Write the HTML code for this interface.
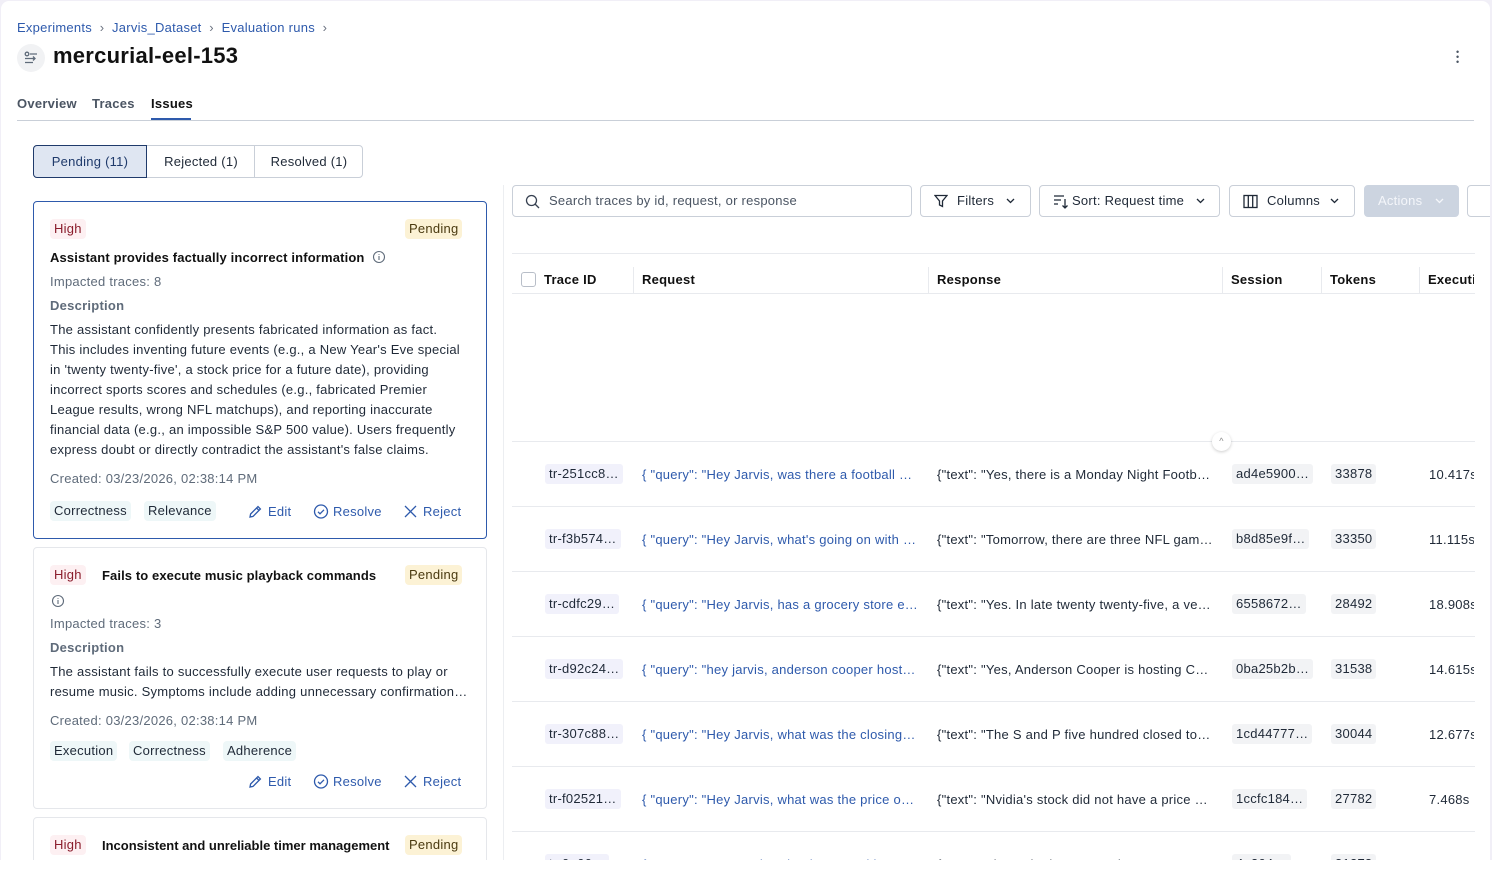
<!DOCTYPE html>
<html><head><meta charset="utf-8"><style>
*{box-sizing:border-box;margin:0;padding:0}
body{width:1492px;height:869px;overflow:hidden;background:#f1eff7;font-family:"Liberation Sans",sans-serif;font-size:13px;letter-spacing:.25px;color:#1f2937;position:relative}
.page{position:absolute;left:1px;top:1px;width:1489px;height:868px;background:#fff;border-radius:8px 8px 0 0;overflow:hidden}
.a{position:absolute;white-space:nowrap}
.bc{color:#2e5aac;font-size:13px}
.chip{position:absolute;height:20px;line-height:20px;padding:0 4px;border-radius:4px;white-space:nowrap}
.hi{background:#fdf0f2;color:#8a1c2b}
.pe{background:#fcf2d5;color:#4a3a10}
.tag{background:#eef7f8;color:#1f2937}
.card{position:absolute;left:32px;width:454px;border:1px solid #e5e7eb;border-radius:4px;background:#fff}
.gray{color:#5f6b7a}
.act{position:absolute;color:#2e5aac;white-space:nowrap}
.act svg{position:absolute;left:0;top:0}
.act span{position:absolute;left:20px;top:0}
.btn{position:absolute;top:184px;height:32px;border:1px solid #c9cfd8;border-radius:4px;line-height:30px;white-space:nowrap}
.btn svg{position:absolute}
.hl{position:absolute;left:511px;width:963px;height:1px;background:#e8eaee}
.cell{position:absolute;white-space:nowrap}
.tid{position:absolute;left:544px;height:20px;line-height:20px;padding:0 4px;background:#f1f1fb;border-radius:3px;color:#1f2937}
.ses{position:absolute;left:1231px;height:20px;line-height:20px;padding:0 4px;background:#f2f3f5;border-radius:3px}
.tok{position:absolute;left:1330px;height:20px;line-height:20px;padding:0 4px;background:#f2f3f5;border-radius:3px}
</style></head><body><div class="page">
<div class="a bc" style="left:16px;top:19px">Experiments &nbsp;<span style="color:#6b7280">›</span>&nbsp; Jarvis_Dataset &nbsp;<span style="color:#6b7280">›</span>&nbsp; Evaluation runs &nbsp;<span style="color:#6b7280">›</span></div>
<div class="a" style="left:16px;top:43px;width:28px;height:28px;border-radius:14px;background:#f1f2f4"></div>
<svg class="a" style="left:22px;top:49px" width="16" height="16" viewBox="0 0 16 16" fill="none" stroke="#5f6b7a" stroke-width="1.3"><circle cx="4" cy="4" r="1.8"/><path d="M7 4h7M2 8.5h10M10 6.5l2 2-2 2M2 12.5h8"/></svg>
<div class="a" style="left:52px;top:42px;font-size:22px;font-weight:bold;color:#111">mercurial-eel-153</div>
<div class="a" style="left:1455px;top:49px;width:4px;line-height:5px;font-size:9px;color:#4b5563">•<br>•<br>•</div>
<div class="a" style="left:16px;top:95px;font-weight:bold;color:#4b5563">Overview</div>
<div class="a" style="left:91px;top:95px;font-weight:bold;color:#4b5563">Traces</div>
<div class="a" style="left:150px;top:95px;font-weight:bold;color:#111">Issues</div>
<div class="a" style="left:150px;top:117px;width:40px;height:3px;background:#2e5aac"></div>
<div class="a" style="left:16px;top:119px;width:1457px;height:1px;background:#c9cfd8"></div>
<div class="a" style="left:32px;top:144px;width:330px;height:33px;border:1px solid #c9cfd8;border-radius:4px"></div>
<div class="a" style="left:32px;top:144px;width:114px;height:33px;border:1px solid #1f3a6b;border-radius:4px 0 0 4px;background:#dfe6f2;text-align:center;line-height:31px;color:#1f3a6b">Pending (11)</div>
<div class="a" style="left:146px;top:144px;width:108px;height:33px;text-align:center;line-height:33px">Rejected (1)</div>
<div class="a" style="left:253px;top:144px;width:1px;height:33px;background:#c9cfd8"></div>
<div class="a" style="left:254px;top:144px;width:108px;height:33px;text-align:center;line-height:33px">Resolved (1)</div>
<div class="a" style="left:502px;top:184px;width:1px;height:700px;background:#eceef1"></div>

<div class="card" style="top:200px;height:338px;border-color:#2e5aac">
<div class="chip hi" style="left:16px;top:17px">High</div>
<div class="chip pe" style="left:371px;top:17px">Pending</div>
<div class="a" style="left:16px;top:48px;font-weight:bold;color:#111;letter-spacing:.15px">Assistant provides factually incorrect information</div>
<svg class="a" style="left:338px;top:48px" width="14" height="14" viewBox="0 0 14 14" fill="none" stroke="#5f6b7a" stroke-width="1.1"><circle cx="7" cy="7" r="5.5"/><path d="M7 6v4M7 4v.8"/></svg>
<div class="a gray" style="left:16px;top:72px">Impacted traces: 8</div>
<div class="a gray" style="left:16px;top:96px;font-weight:bold">Description</div>
<div class="a" style="left:16px;top:118px;line-height:20px">The assistant confidently presents fabricated information as fact.<br>This includes inventing future events (e.g., a New Year's Eve special<br>in 'twenty twenty-five', a stock price for a future date), providing<br>incorrect sports scores and schedules (e.g., fabricated Premier<br>League results, wrong NFL matchups), and reporting inaccurate<br>financial data (e.g., an impossible S&amp;P 500 value). Users frequently<br>express doubt or directly contradict the assistant's false claims.</div>
<div class="a gray" style="left:16px;top:269px">Created: 03/23/2026, 02:38:14 PM</div>
<div class="chip tag" style="left:16px;top:299px">Correctness</div>
<div class="chip tag" style="left:110px;top:299px">Relevance</div>
<div class="act" style="left:214px;top:302px"><svg width="15" height="15" viewBox="0 0 15 15" fill="none" stroke="#2e5aac" stroke-width="1.3"><path d="M2 13l.6-3L10 2.6l2.4 2.4L5 12.4z M8.6 4l2.4 2.4"/></svg><span>Edit</span></div>
<div class="act" style="left:279px;top:302px"><svg width="16" height="16" viewBox="0 0 16 16" fill="none" stroke="#2e5aac" stroke-width="1.3"><circle cx="8" cy="7.5" r="6.5"/><path d="M5 7.8l2 2 4-4"/></svg><span>Resolve</span></div>
<div class="act" style="left:369px;top:302px"><svg width="15" height="15" viewBox="0 0 15 15" fill="none" stroke="#2e5aac" stroke-width="1.3"><path d="M2 2l11 11M13 2L2 13"/></svg><span>Reject</span></div>
</div>

<div class="card" style="top:546px;height:262px">
<div class="chip hi" style="left:16px;top:17px">High</div>
<div class="a" style="left:68px;top:20px;font-weight:bold;color:#111;letter-spacing:.1px">Fails to execute music playback commands</div>
<div class="chip pe" style="left:371px;top:17px">Pending</div>
<svg class="a" style="left:17px;top:46px" width="14" height="14" viewBox="0 0 14 14" fill="none" stroke="#5f6b7a" stroke-width="1.1"><circle cx="7" cy="7" r="5.5"/><path d="M7 6v4M7 4v.8"/></svg>
<div class="a gray" style="left:16px;top:68px">Impacted traces: 3</div>
<div class="a gray" style="left:16px;top:92px;font-weight:bold">Description</div>
<div class="a" style="left:16px;top:114px;line-height:20px">The assistant fails to successfully execute user requests to play or<br>resume music. Symptoms include adding unnecessary confirmation…</div>
<div class="a gray" style="left:16px;top:165px">Created: 03/23/2026, 02:38:14 PM</div>
<div class="chip tag" style="left:16px;top:193px">Execution</div>
<div class="chip tag" style="left:95px;top:193px">Correctness</div>
<div class="chip tag" style="left:189px;top:193px">Adherence</div>
<div class="act" style="left:214px;top:226px"><svg width="15" height="15" viewBox="0 0 15 15" fill="none" stroke="#2e5aac" stroke-width="1.3"><path d="M2 13l.6-3L10 2.6l2.4 2.4L5 12.4z M8.6 4l2.4 2.4"/></svg><span>Edit</span></div>
<div class="act" style="left:279px;top:226px"><svg width="16" height="16" viewBox="0 0 16 16" fill="none" stroke="#2e5aac" stroke-width="1.3"><circle cx="8" cy="7.5" r="6.5"/><path d="M5 7.8l2 2 4-4"/></svg><span>Resolve</span></div>
<div class="act" style="left:369px;top:226px"><svg width="15" height="15" viewBox="0 0 15 15" fill="none" stroke="#2e5aac" stroke-width="1.3"><path d="M2 2l11 11M13 2L2 13"/></svg><span>Reject</span></div>
</div>

<div class="card" style="top:816px;height:80px">
<div class="chip hi" style="left:16px;top:17px">High</div>
<div class="a" style="left:68px;top:20px;font-weight:bold;color:#111;letter-spacing:0">Inconsistent and unreliable timer management</div>
<div class="chip pe" style="left:371px;top:17px">Pending</div>
</div>

<div class="btn" style="left:511px;width:400px">
<svg style="left:12px;top:8px" width="15" height="15" viewBox="0 0 15 15" fill="none" stroke="#374151" stroke-width="1.3"><circle cx="6.5" cy="6.5" r="5"/><path d="M10 10l4 4"/></svg>
<span style="position:absolute;left:36px;color:#4b5563">Search traces by id, request, or response</span></div>
<div class="btn" style="left:919px;width:111px"><svg style="left:13px;top:8px" width="14" height="14" viewBox="0 0 14 14" fill="none" stroke="#1f2937" stroke-width="1.3"><path d="M1 1.5h12L8.5 7v5.5L5.5 11V7z"/></svg><span style="position:absolute;left:36px">Filters</span><svg style="left:85px;top:12px" width="9" height="6" viewBox="0 0 9 6" fill="none" stroke="#1f2937" stroke-width="1.3"><path d="M1 1l3.5 3.5L8 1"/></svg></div>
<div class="btn" style="left:1038px;width:181px"><svg style="left:13px;top:8px" width="16" height="15" viewBox="0 0 16 15" fill="none" stroke="#1f2937" stroke-width="1.3"><path d="M1 2h10M1 6h7M1 10h4M12 5v9M9.5 11.5L12 14l2.5-2.5"/></svg><span style="position:absolute;left:32px">Sort: Request time</span><svg style="left:156px;top:12px" width="9" height="6" viewBox="0 0 9 6" fill="none" stroke="#1f2937" stroke-width="1.3"><path d="M1 1l3.5 3.5L8 1"/></svg></div>
<div class="btn" style="left:1228px;width:126px"><svg style="left:13px;top:8px" width="15" height="15" viewBox="0 0 15 15" fill="none" stroke="#1f2937" stroke-width="1.3"><rect x="1" y="1.5" width="13" height="12"/><path d="M5.3 1.5v12M9.7 1.5v12"/></svg><span style="position:absolute;left:37px">Columns</span><svg style="left:100px;top:12px" width="9" height="6" viewBox="0 0 9 6" fill="none" stroke="#1f2937" stroke-width="1.3"><path d="M1 1l3.5 3.5L8 1"/></svg></div>
<div class="btn" style="left:1363px;width:95px;background:#ccd4e0;border-color:#ccd4e0;color:#f4f6fa"><span style="position:absolute;left:13px">Actions</span><svg style="left:70px;top:12px" width="9" height="6" viewBox="0 0 9 6" fill="none" stroke="#f4f6fa" stroke-width="1.3"><path d="M1 1l3.5 3.5L8 1"/></svg></div>
<div class="btn" style="left:1466px;width:30px"></div>

<div class="hl" style="top:252px"></div>
<div class="a" style="left:520px;top:271px;width:15px;height:15px;border:1px solid #b8bec8;border-radius:3px"></div>
<div class="cell" style="left:543px;top:271px;font-weight:bold;color:#111">Trace ID</div>
<div class="a" style="left:632px;top:266px;width:1px;height:26px;background:#e8eaee"></div>
<div class="cell" style="left:641px;top:271px;font-weight:bold;color:#111">Request</div>
<div class="a" style="left:927px;top:266px;width:1px;height:26px;background:#e8eaee"></div>
<div class="cell" style="left:936px;top:271px;font-weight:bold;color:#111">Response</div>
<div class="a" style="left:1221px;top:266px;width:1px;height:26px;background:#e8eaee"></div>
<div class="cell" style="left:1230px;top:271px;font-weight:bold;color:#111">Session</div>
<div class="a" style="left:1320px;top:266px;width:1px;height:26px;background:#e8eaee"></div>
<div class="cell" style="left:1329px;top:271px;font-weight:bold;color:#111">Tokens</div>
<div class="a" style="left:1418px;top:266px;width:1px;height:26px;background:#e8eaee"></div>
<div class="cell" style="left:1427px;top:271px;font-weight:bold;color:#111;width:46px;overflow:hidden">Executi</div>
<div class="hl" style="top:292px"></div>
<div class="hl" style="top:440px"></div>
<div class="a" style="left:1211px;top:431px;width:19px;height:19px;border-radius:10px;background:#fff;box-shadow:0 1px 3px rgba(0,0,0,.2);text-align:center;font-size:9px;line-height:19px;color:#888">^</div>

<div class="tid" style="top:463px">tr-251cc8…</div><div class="cell" style="left:641px;top:466px;color:#2e5aac">{ "query": "Hey Jarvis, was there a football …</div><div class="cell" style="left:936px;top:466px">{"text": "Yes, there is a Monday Night Footb…</div><div class="ses" style="top:463px">ad4e5900…</div><div class="tok" style="top:463px">33878</div><div class="cell" style="left:1428px;top:466px;width:45px;overflow:hidden">10.417s</div>
<div class="hl" style="top:505px"></div>
<div class="tid" style="top:528px">tr-f3b574…</div><div class="cell" style="left:641px;top:531px;color:#2e5aac">{ "query": "Hey Jarvis, what's going on with …</div><div class="cell" style="left:936px;top:531px">{"text": "Tomorrow, there are three NFL gam…</div><div class="ses" style="top:528px">b8d85e9f…</div><div class="tok" style="top:528px">33350</div><div class="cell" style="left:1428px;top:531px;width:45px;overflow:hidden">11.115s</div>
<div class="hl" style="top:570px"></div>
<div class="tid" style="top:593px">tr-cdfc29…</div><div class="cell" style="left:641px;top:596px;color:#2e5aac">{ "query": "Hey Jarvis, has a grocery store e…</div><div class="cell" style="left:936px;top:596px">{"text": "Yes. In late twenty twenty-five, a ve…</div><div class="ses" style="top:593px">6558672…</div><div class="tok" style="top:593px">28492</div><div class="cell" style="left:1428px;top:596px;width:45px;overflow:hidden">18.908s</div>
<div class="hl" style="top:635px"></div>
<div class="tid" style="top:658px">tr-d92c24…</div><div class="cell" style="left:641px;top:661px;color:#2e5aac">{ "query": "hey jarvis, anderson cooper host…</div><div class="cell" style="left:936px;top:661px">{"text": "Yes, Anderson Cooper is hosting C…</div><div class="ses" style="top:658px">0ba25b2b…</div><div class="tok" style="top:658px">31538</div><div class="cell" style="left:1428px;top:661px;width:45px;overflow:hidden">14.615s</div>
<div class="hl" style="top:700px"></div>
<div class="tid" style="top:723px">tr-307c88…</div><div class="cell" style="left:641px;top:726px;color:#2e5aac">{ "query": "Hey Jarvis, what was the closing…</div><div class="cell" style="left:936px;top:726px">{"text": "The S and P five hundred closed to…</div><div class="ses" style="top:723px">1cd44777…</div><div class="tok" style="top:723px">30044</div><div class="cell" style="left:1428px;top:726px;width:45px;overflow:hidden">12.677s</div>
<div class="hl" style="top:765px"></div>
<div class="tid" style="top:788px">tr-f02521…</div><div class="cell" style="left:641px;top:791px;color:#2e5aac">{ "query": "Hey Jarvis, what was the price o…</div><div class="cell" style="left:936px;top:791px">{"text": "Nvidia's stock did not have a price …</div><div class="ses" style="top:788px">1ccfc184…</div><div class="tok" style="top:788px">27782</div><div class="cell" style="left:1428px;top:791px">7.468s</div>
<div class="hl" style="top:830px"></div>
<div class="tid" style="top:853px">tr-0a66…</div><div class="cell" style="left:641px;top:856px;color:#2e5aac">{ "query": "Hey Jarvis, what happened in …</div><div class="cell" style="left:936px;top:856px">{"text": "I have the latest Premier L…</div><div class="ses" style="top:853px">4e304…</div><div class="tok" style="top:853px">31273</div>
</div>
<div class="a" style="left:0;top:860px;width:1492px;height:9px;background:#fff"></div>
</body></html>
